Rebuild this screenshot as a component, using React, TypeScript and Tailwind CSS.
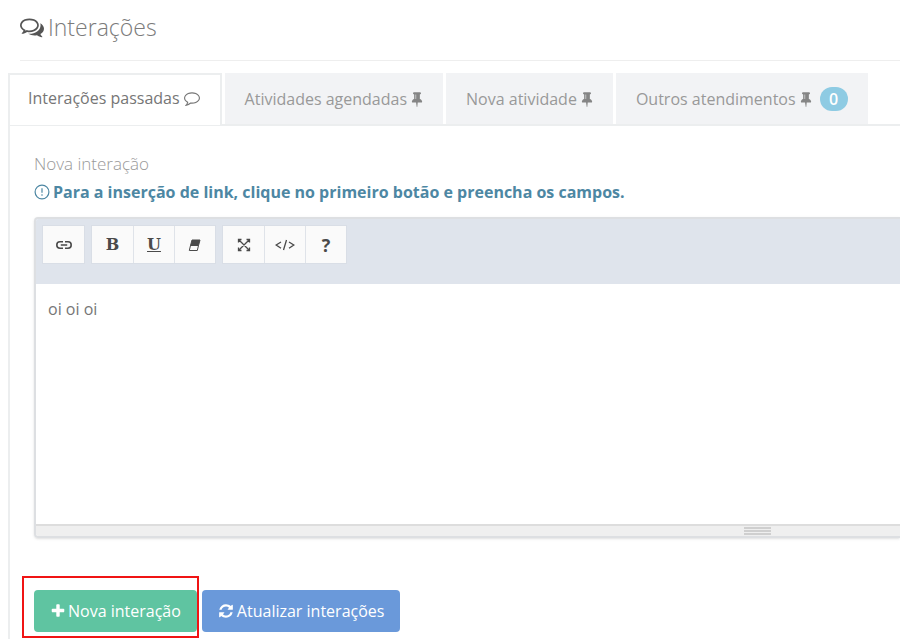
import type { ReactNode } from 'react';

const icons = {
    comment: 'M896 384q-204 0-381.5 69.500t-282 187.500-104.500 255q0 112 71.500 213.500t201.500 175.500l87 50-27 96q-24 91-70 172 152-63 275-171l43-38 57 6q69 8 130 8 204 0 381.500-69.500t282-187.500 104.500-255-104.500-255-282-187.500-381.500-69.500zM1792 896q0 174-120 321.500t-326 233-450 85.500q-70 0-145-8-198 175-460 242-49 14-114 22h-5q-15 0-27-10.500t-16-27.500v-1q-3-4-.5-12t2-10 4.500-9.500l6-9 7-8.500 8-9q7-8 31-34.500t34.500-38 31-39.500 32.500-51 27-59 26-76q-157-89-247.500-220t-90.500-281q0-174 120-321.500t326-233 450-85.500 450 85.500 326 233 120 321.500z',
    comments: 'M704 384q-153 0-286 52t-211.500 141-78.500 191q0 82 53 158t149 132l97 56-35 84q34-20 62-39l44-31 53 10q78 14 153 14 153 0 286-52t211.500-141 78.500-191-78.500-191-211.500-141-286-52zm0-128q191 0 353.500 68.500t256.500 186.500 94 257-94 257-256.500 186.500-353.500 68.500q-86 0-176-16-124 88-278 128-36 9-86 16h-3q-11 0-20.500-8t-11.500-21q-1-3-1-6.500t.5-6.500 2-6l2.500-5 3.500-5.500 4-5 4.500-5 4-4.500q5-6 23-25t26-29.500 22.500-29 25-38.500 20.500-44q-124-72-195-177t-71-224q0-139 94-257t256.500-186.500 353.500-68.500zm822 1169q10 24 20.500 44t25 38.500 22.500 29 26 29.500 23 25q1 1 4 4.500t4.500 5 4 5 3.500 5.500l2.500 5 2 6 .5 6.500-1 6.500q-3 14-13 22t-22 7q-50-7-86-16-154-40-278-128-90 16-176 16-271 0-472-132 58 4 88 4 161 0 309-45t264-129q125-92 192-212t67-254q0-77-23-152 129 71 204 178t75 230q0 120-71 224.500t-195 176.500z',
    pin: 'M800 864v-448q0-14-9-23t-23-9-23 9-9 23v448q0 14 9 23t23 9 23-9 9-23zm672 352q0 26-19 45t-45 19h-429l-51 483q-2 12-10.500 20.500t-20.500 8.500h-1q-27 0-32-27l-76-485h-404q-26 0-45-19t-19-45q0-123 78.500-221.500t177.500-98.500v-512q-52 0-90-38t-38-90 38-90 90-38h640q52 0 90 38t38 90-38 90-90 38v512q99 0 177.500 98.500t78.500 221.500z',
    plus: 'M1600 736v192q0 40-28 68t-68 28h-416v416q0 40-28 68t-68 28h-192q-40 0-68-28t-28-68v-416h-416q-40 0-68-28t-28-68v-192q0-40 28-68t68-28h416v-416q0-40 28-68t68-28h192q40 0 68 28t28 68v416h416q40 0 68 28t28 68z',
    refresh: 'M1639 1056q0 5-1 7-64 268-268 434.500t-478 166.500q-146 0-282.500-55t-243.500-157l-129 129q-19 19-45 19t-45-19-19-45v-448q0-26 19-45t45-19h448q26 0 45 19t19 45-19 45l-137 137q71 66 161 102t187 36q134 0 250-65t186-179q11-17 53-117 8-23 30-23h192q13 0 22.500 9.500t9.500 22.500zm25-800v448q0 26-19 45t-45 19h-448q-26 0-45-19t-19-45 19-45l138-138q-148-137-349-137-134 0-250 65t-186 179q-11 17-53 117-8 23-30 23h-199q-13 0-22.500-9.500t-9.500-22.500v-7q65-268 270-434.500t480-166.500q146 0 284 55.500t245 156.500l130-129q19-19 45-19t45 19 19 45z',
};

function Icon({ name, className = 'size-4' }: { name: keyof typeof icons; className?: string }) {
    return (
        <svg
            viewBox="0 0 1792 1792"
            preserveAspectRatio="xMidYMid slice"
            fill="currentColor"
            className={`shrink-0 ${className}`}
            aria-hidden="true"
        >
            <path d={icons[name]} />
        </svg>
    );
}

const toolGroups: { label: string; icon: ReactNode }[][] = [
    [
        {
            label: 'Link',
            icon: (
                <svg viewBox="0 0 16 16" className="size-4" fill="none" stroke="currentColor" strokeWidth="1.6">
                    <path d="M7 11.2H4a3.200 3.200 0 0 1 0-6.400H7M9 4.800h3a3.200 3.200 0 0 1 0 6.400H9M4.800 8h6.400" />
                </svg>
            ),
        },
    ],
    [
        { label: 'Negrito', icon: <span className="font-['DejaVu_Serif',serif] text-base font-bold">B</span> },
        { label: 'Sublinhado', icon: <span className="font-['DejaVu_Serif',serif] text-base font-bold underline">U</span> },
        {
            label: 'Limpar formatação',
            icon: (
                <svg viewBox="0 0 16 16" className="size-4" fill="currentColor" stroke="currentColor" strokeLinejoin="round">
                    <path d="M5 3h8L11.500 8.500H3.500z" />
                    <path d="M3.500 8.500h8L10.300 13.500H2.300z" fill="none" />
                </svg>
            ),
        },
    ],
    [
        {
            label: 'Tela cheia',
            icon: (
                <svg viewBox="0 0 16 16" className="size-4" fill="none" stroke="currentColor" strokeWidth="1.300">
                    <path d="M3 3l10 10M13 3L3 13M2.500 5.500V2.500H5.500M10.500 2.500h3V5.500M13.500 10.500v3H10.500M5.500 13.500H2.500V10.500" />
                </svg>
            ),
        },
        {
            label: 'Código',
            icon: (
                <svg viewBox="0 0 20 16" className="h-4 w-5" fill="none" stroke="currentColor" strokeWidth="1.300">
                    <path d="M6 5L1.200 8 6 11.200M14 5L18.800 8 14 11.200M11.500 3l-3 10" />
                </svg>
            ),
        },
        { label: 'Ajuda', icon: <span className="text-lg font-bold">?</span> },
    ],
];

const tabs = [
    { label: 'Atividades agendadas' },
    { label: 'Nova atividade' },
    { label: 'Outros atendimentos', count: 0 },
];

export default function App() {
    return (
        <main className="flex min-h-screen flex-col overflow-x-hidden bg-white font-['Open_Sans',sans-serif] text-base text-[#767676]">
            {/* Page title */}
            <header className="ml-5 flex h-[61px] items-center gap-1 border-b border-[#eeeeee] pb-1.5">
                <Icon name="comments" className="size-6 text-[#555555]" />
                <h1 className="text-[23px] font-light text-[#7b7b7b]">Interações</h1>
            </header>

            <div className="mt-3 ml-2 flex flex-1 flex-col">
                {/* Tabs */}
                <nav className="flex gap-[3px] border-b-2 border-[#eceeef]">
                    <button className="-mb-px flex h-[52px] items-center gap-1 border-2 border-b-0 border-[#eceeef] bg-white pr-5 pb-1 pl-[18px]">
                        Interações passadas
                        <Icon name="comment" />
                    </button>
                    {tabs.map((tab) => (
                        <button key={tab.label} className="flex items-center gap-1 bg-[#f2f3f5] px-5 text-[#999999]">
                            {tab.label}
                            <Icon name="pin" className="h-4 w-3 text-[#858585]" />
                            {tab.count !== undefined && (
                                <span className="ml-1 flex h-6 w-7 items-center justify-center rounded-full bg-[#8ecbe3] text-base font-semibold text-white">
                                    {tab.count}
                                </span>
                            )}
                        </button>
                    ))}
                </nav>

                <section className="flex-1 border-l-2 border-[#eceeef] pt-6 pl-6">
                    <h2 className="text-[17px] leading-7 font-light text-[#999999]">Nova interação</h2>
                    <p className="flex items-center gap-[3px] leading-7 font-bold text-[#4d87a3]">
                        <svg viewBox="0 0 16 16" className="size-4 shrink-0" fill="none" stroke="currentColor" strokeWidth="1.200">
                            <circle cx="8" cy="8" r="6.900" />
                            <path d="M8 4.300v4.500M8 10.200v1.500" />
                        </svg>
                        Para a inserção de link, clique no primeiro botão e preencha os campos.
                    </p>

                    {/* Editor */}
                    <div className="mt-[11px] overflow-hidden rounded-l border-2 border-r-0 border-[#dddfe2] shadow-sm">
                        <div className="flex h-[65px] gap-1.5 bg-[#dfe4ec] p-1.5">
                            {toolGroups.map((group) => (
                                <div key={group[0].label} className="flex h-[39px] border border-[#d9dee6] bg-[#fafafa]">
                                    {group.map((tool) => (
                                        <button
                                            key={tool.label}
                                            aria-label={tool.label}
                                            className="flex w-[41px] items-center justify-center border-l border-[#dfe3e9] text-[#4a4a4a] first:border-l-0"
                                        >
                                            {tool.icon}
                                        </button>
                                    ))}
                                </div>
                            ))}
                        </div>
                        <textarea
                            aria-label="Nova interação"
                            defaultValue="oi oi oi"
                            className="block h-60 w-full resize-none px-3 py-[13px] outline-none"
                        />
                        <div className="h-3 border-t-2 border-[#dddddd] bg-[#efefef] pt-px">
                            <div className="ml-[82%] flex w-[27px] flex-col gap-px">
                                <div className="h-0.5 bg-[#cfcfcf]" />
                                <div className="h-0.5 bg-[#cfcfcf]" />
                                <div className="h-0.5 bg-[#cfcfcf]" />
                            </div>
                        </div>
                    </div>

                    {/* Actions */}
                    <div className="mt-[52px] flex gap-[5px] text-white">
                        <div className="relative">
                            <button className="flex h-[42px] items-center gap-0.5 rounded bg-[#5fc4a1] px-4">
                                <Icon name="plus" />
                                Nova interação
                            </button>
                            <span className="pointer-events-none absolute -top-3.5 -right-0.5 -bottom-1.5 -left-3 border-2 border-[#f01414]" />
                        </div>
                        <button className="flex h-[42px] items-center gap-[3px] rounded bg-[#6a99da] px-4">
                            <Icon name="refresh" />
                            Atualizar interações
                        </button>
                    </div>
                </section>
            </div>
        </main>
    );
}
